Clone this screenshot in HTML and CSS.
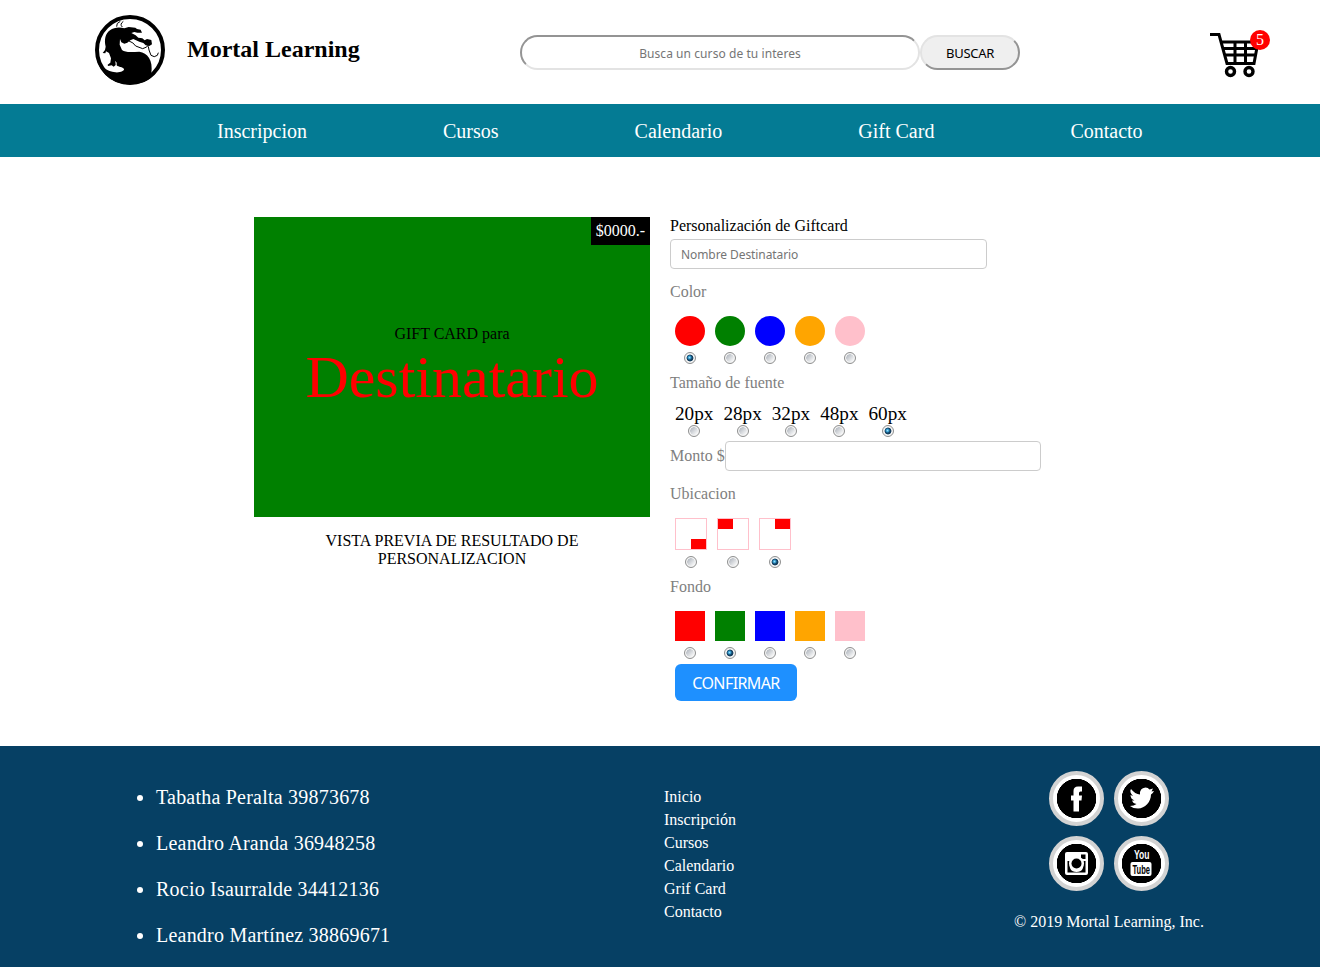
FILE: index.html
```html
<!DOCTYPE html>
<html lang="es">
<head>
<meta charset="utf-8">
<title>Mortal Learning</title>
<link rel="stylesheet" href="styles.css">
</head>
<body>
<header class="header">
  <div class="brand">
    <svg class="logo" viewBox="15 15 210 210">
      <circle cx="120" cy="120" r="99" fill="#fff" stroke="#000" stroke-width="12"/>
      <path d="M20 148C32 172 52 184 76 187C92 188 103 183 102 177C98 170 86 172 80 166L80 158L76 152L77 165L71 170L65 166L54 168L53 164L61 158L63 145L57 129L48 124L46 130L38 129L45 120L47 110C42 90 46 70 60 61C72 52 88 51 103 55L116 51L136 53L141 57L152 59L156 68L142 68L133 66L124 69L137 76L145 83L157 85L164 91L171 87L184 90L186 103L178 108L167 106L160 99L148 95L130 87L121 91L112 98L103 101L94 97L90 87L89 104L96 120C107 129 130 125 148 125C172 128 190 150 184 190L207 171C190 207 160 223 120 223C75 223 35 199 20 148Z"/>
      <path d="M80 50Q78 39 91 34M97 51Q88 43 100 34M50 78L54 70M117 93Q130 97 137 108L158 116L170 111L176 104M175 109L177 120L183 136Q193 144 202 136L205 128" fill="none" stroke="#000" stroke-width="3"/>
    </svg>
    <h1 class="title">Mortal Learning</h1>
  </div>
  <form class="search">
    <input class="search-input" type="text" placeholder="Busca un curso de tu interes">
    <button class="search-btn" type="button">BUSCAR</button>
  </form>
  <div class="cart">
    <svg class="cart-icon" viewBox="0 0 50 46">
      <g fill="none" stroke="#000">
        <path d="M0 2.500H9L17 31.500H44L48 10H12" stroke-width="3"/>
        <path d="M13 16.500H46M14.500 23H45" stroke-width="3"/>
        <path d="M25 10V31M35.500 10V31" stroke-width="3"/>
        <circle cx="20.500" cy="39.500" r="4" stroke-width="3.400"/>
        <circle cx="39" cy="39.500" r="4" stroke-width="3.400"/>
      </g>
    </svg>
    <span class="badge">5</span>
  </div>
</header>
<nav class="nav"><a>Inscripcion</a><a>Cursos</a><a>Calendario</a><a>Gift Card</a><a>Contacto</a></nav>
<main class="main">
  <section class="preview">
    <div class="card">
      <span class="price">$0000.-</span>
      <span>GIFT CARD para</span>
      <span class="recipient">Destinatario</span>
    </div>
    <p class="caption">VISTA PREVIA DE RESULTADO DE PERSONALIZACION</p>
  </section>
  <form class="form">
    <div class="form-title">Personalización de Giftcard</div>
    <input class="field" type="text" placeholder="Nombre Destinatario">
    <div class="label label-color">Color</div>
    <div class="options">
      <label class="option"><span class="dot red"></span><input type="radio" name="color" checked></label>
      <label class="option"><span class="dot green"></span><input type="radio" name="color"></label>
      <label class="option"><span class="dot blue"></span><input type="radio" name="color"></label>
      <label class="option"><span class="dot orange"></span><input type="radio" name="color"></label>
      <label class="option"><span class="dot pink"></span><input type="radio" name="color"></label>
    </div>
    <div class="label label-size">Tamaño de fuente</div>
    <div class="options sizes">
      <label class="option">20px<input type="radio" name="size"></label>
      <label class="option">28px<input type="radio" name="size"></label>
      <label class="option">32px<input type="radio" name="size"></label>
      <label class="option">48px<input type="radio" name="size"></label>
      <label class="option">60px<input type="radio" name="size" checked></label>
    </div>
    <div class="amount"><span class="label">Monto $</span><input class="field amount-field" type="text"></div>
    <div class="label label-place">Ubicacion</div>
    <div class="options places">
      <label class="option"><span class="place bottom-right"><i></i></span><input type="radio" name="place"></label>
      <label class="option"><span class="place top-left"><i></i></span><input type="radio" name="place"></label>
      <label class="option"><span class="place top-right"><i></i></span><input type="radio" name="place" checked></label>
    </div>
    <div class="label label-back">Fondo</div>
    <div class="options">
      <label class="option"><span class="swatch red"></span><input type="radio" name="back"></label>
      <label class="option"><span class="swatch green"></span><input type="radio" name="back" checked></label>
      <label class="option"><span class="swatch blue"></span><input type="radio" name="back"></label>
      <label class="option"><span class="swatch orange"></span><input type="radio" name="back"></label>
      <label class="option"><span class="swatch pink"></span><input type="radio" name="back"></label>
    </div>
    <button class="confirm" type="button">CONFIRMAR</button>
  </form>
</main>
<footer class="footer">
  <ul class="members">
    <li>Tabatha Peralta 39873678</li>
    <li>Leandro Aranda 36948258</li>
    <li>Rocio Isaurralde 34412136</li>
    <li>Leandro Martínez 38869671</li>
  </ul>
  <div class="links"><a>Inicio</a><a>Inscripción</a><a>Cursos</a><a>Calendario</a><a>Grif Card</a><a>Contacto</a></div>
  <div class="contact">
    <div class="social">
      <svg class="social-icon" viewBox="0 0 39 39"><path d="M14 16.500H16.500V12Q16.500 7.500 21 7.500H25V12.500H23.500Q22 12.500 22 14V16.500H25L24.500 21.500H22V32.500H16.500V21.500H14Z"/></svg>
      <svg class="social-icon" viewBox="0 0 39 39"><path d="M9 10Q13 15 18 15.500Q17.500 9 23.500 8.500Q26 8.500 27.500 10.500L31 9.500L29.500 12.500L32 12Q31 14 29 15.500C29 23 23 29.500 16 29.500Q11 29.500 8 27Q12 27 14.500 25Q11 24.500 10 21.500H12.500Q8.500 20 8.500 16L11 17Q7 13 9 10Z"/></svg>
      <svg class="social-icon" viewBox="0 0 39 39"><rect x="8" y="8" width="23" height="23" rx="2"/><path class="ink" d="M24 10.500H28.500V15H24ZM10.500 17H13Q11 28 19.500 28Q28 28 26 17H28.500V28.500H10.500Z"/><circle cx="19.500" cy="19.500" r="7.500"/><circle class="ink" cx="19.500" cy="19.500" r="5"/></svg>
      <svg class="social-icon" viewBox="0 0 39 39"><text x="12" y="15" textLength="15.500" lengthAdjust="spacingAndGlyphs">You</text><rect x="8.500" y="18" width="21" height="14" rx="2"/><text class="ink" x="10.500" y="29.500" textLength="17.500" lengthAdjust="spacingAndGlyphs">Tube</text></svg>
    </div>
    <p class="copy">© 2019 Mortal Learning, Inc.</p>
  </div>
</footer>
</body>
</html>
```
FILE: styles.css
```css
* { box-sizing: border-box; }
body { margin: 0; background: #fff; color: #000; font: 16px/18px "Liberation Serif", serif; }
input, button { font-family: "Noto Sans", sans-serif; margin: 0; }

.header { display: grid; grid-template-columns: 425px 500px 60px; column-gap: 0; height: 104px; padding-left: 95px; align-items: start; }
.brand { display: flex; align-items: center; gap: 22px; padding-top: 15px; }
.logo { width: 70px; height: 70px; }
.title { margin: 0; padding-bottom: 2px; font-size: 24px; line-height: 28px; }
.search { display: flex; padding-top: 35px; }
.search-input { width: 400px; height: 35px; padding: 3px 2px 1px; border: 2px solid; border-color: #949494 #e3e3e3 #e3e3e3 #949494; border-radius: 20px; text-align: center; font-size: 12px; letter-spacing: .07px; background: #fff; }
.search-input::placeholder, .field::placeholder { color: #757575; opacity: 1; }
.search-btn { width: 100px; height: 35px; padding: 1px 0; border: 2px solid; border-color: #e3e3e3 #949494 #949494 #e3e3e3; border-radius: 20px; background: #efefef; font-size: 13px; letter-spacing: -.3px; color: #000; }
.cart { position: relative; width: 60px; height: 46px; margin: 32px 0 0 190px; }
.cart-icon { display: block; width: 50px; height: 46px; }
.badge { position: absolute; left: 40px; top: -2px; width: 20px; height: 20px; border-radius: 50%; background: red; color: #fff; text-align: center; line-height: 20px; }

.nav { display: flex; gap: 136px; height: 53px; padding-left: 217px; background: #047b94; color: #fff; font-size: 20px; line-height: 54px; }

.main { display: flex; gap: 20px; height: 589px; padding: 60px 0 0 254px; }
.preview { width: 396px; }
.card { position: relative; display: flex; flex-direction: column; align-items: center; justify-content: center; height: 300px; padding-top: 2px; background: green; }
.price { position: absolute; top: 0; right: 0; padding: 5px; background: #000; color: #fff; }
.recipient { font-size: 60px; line-height: 69px; color: red; }
.caption { width: 296px; margin: 15px auto 0; text-align: center; }

.form { width: 400px; }
.form-title { height: 22px; }
.field { display: block; width: 317px; height: 30px; padding: 0 10px; border: 1px solid #ccc; border-radius: 4px; font-size: 12px; letter-spacing: -.08px; }
.label { color: gray; }
.label-color { margin: 14px 0 15px; }
.label-size { margin: 10px 0 11px; }
.label-place { margin: 14px 0 15px; }
.label-back { margin: 10px 0 15px; }
.options { display: flex; gap: 10px; padding-left: 5px; }
.option { display: flex; flex-direction: column; align-items: center; gap: 6px; }
.sizes { font-size: 19.200px; line-height: 22px; }
.sizes .option { gap: 0; }
.dot, .swatch { width: 30px; height: 30px; }
.dot { border-radius: 50%; }
.red { background: red; }
.green { background: green; }
.blue { background: blue; }
.orange { background: orange; }
.pink { background: pink; }
.option input { appearance: none; width: 12px; height: 12px; border: 1px solid #8e8f8f; border-radius: 50%; background: radial-gradient(circle at 5px 5px, transparent 3.500px, #f4f4f4 4px), linear-gradient(135deg, #b9bec5 25%, #f2f3f4 75%); }
.option input:checked { background: radial-gradient(circle at 4.500px 4.500px, #9be2fa 0, #2b93c8 1.500px, transparent 2.500px), radial-gradient(circle at 5px 5px, #153f5f 3px, #f4f4f4 3.800px); }
.amount { display: flex; align-items: center; margin-top: 4px; }
.amount-field { width: 316px; }
.place { display: flex; width: 32px; height: 32px; border: 1px solid pink; }
.place i { width: 15px; height: 10px; background: red; }
.bottom-right { justify-content: flex-end; align-items: flex-end; }
.top-right { justify-content: flex-end; }
.confirm { display: block; width: 122px; height: 37px; margin: 5px 0 0 5px; padding: 0; border: 0; border-radius: 6px; background: #1e90ff; color: #fff; font-size: 16px; letter-spacing: -.6px; }

.footer { display: grid; grid-template-columns: 508px 341px 208px; height: 221px; padding-left: 156px; background: #064064; color: #fff; }
.members { margin: 28px 0 0; padding: 0; font-size: 20px; line-height: 46px; letter-spacing: .22px; }
.links { display: flex; flex-direction: column; padding-top: 39px; line-height: 23px; }
.contact { display: flex; flex-direction: column; align-items: center; padding-top: 25px; }
.social { display: grid; grid-template-columns: 55px 55px; gap: 10px; }
.social-icon { width: 55px; height: 55px; padding: 4px; border: 4px solid lightgray; border-radius: 50%; background: radial-gradient(circle, #000 19.500px, #fff 20px); fill: #fff; font: 12px "Liberation Sans", sans-serif; stroke-width: 0; }
.social-icon text { font-weight: bold; }
.ink { fill: #000; }
.copy { margin: 22px 0 0; }
```
